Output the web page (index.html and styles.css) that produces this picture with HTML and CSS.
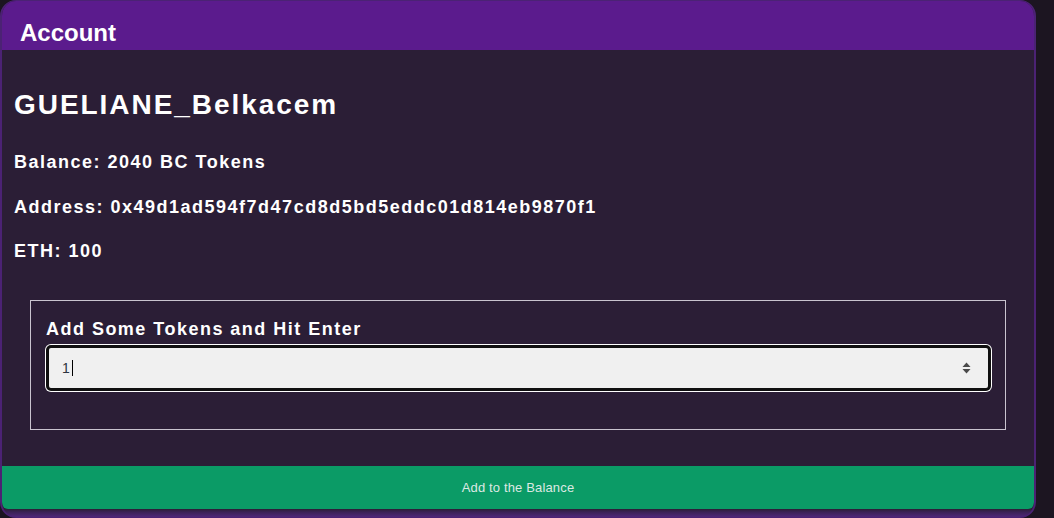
FILE: index.html
```html
<!DOCTYPE html>
<html lang="en">
<head>
<meta charset="utf-8">
<title>Account</title>
<link rel="stylesheet" href="styles.css">
</head>
<body>
<div class="card">
  <div class="card-header">Account</div>
  <div class="card-body">
    <h1 class="name">GUELIANE_Belkacem</h1>
    <p class="info info-first">Balance: 2040 BC Tokens</p>
    <p class="info">Address: 0x49d1ad594f7d47cd8d5bd5eddc01d814eb9870f1</p>
    <p class="info">ETH: 100</p>
    <form class="token-form">
      <label class="token-label" for="tokens">Add Some Tokens and Hit Enter</label>
      <div class="token-input" id="tokens" role="textbox">
        <span class="token-value">1</span><span class="caret"></span>
        <svg class="spin" width="9" height="12" viewBox="0 0 9 12" aria-hidden="true">
          <path d="M4.5 0.5 L8.5 5 L0.5 5 Z" fill="#4a4a4a"/>
          <path d="M0.5 7 L8.5 7 L4.5 11.5 Z" fill="#4a4a4a"/>
        </svg>
      </div>
    </form>
  </div>
  <button class="add-btn" type="button">Add to the Balance</button>
</div>
</body>
</html>
```

FILE: styles.css
```css
html, body {
  margin: 0;
  padding: 0;
  background: #1c1521;
  font-family: "Liberation Sans", Arial, sans-serif;
  color: #ffffff;
}

.card {
  box-sizing: border-box;
  width: 1036px;
  height: 518px;
  border: 1px solid #4b2274;
  border-left-width: 2px;
  border-right-width: 2px;
  border-radius: 16px;
  overflow: hidden;
  background: linear-gradient(to bottom, #2b1e36 0, #2b1e36 508px, #3a2255 511px, #52287e 517px);
  display: flex;
  flex-direction: column;
}

.card-header {
  box-sizing: border-box;
  height: 49px;
  padding: 18px 18px 3px;
  background: #5b1b8d;
  font-size: 24px;
  line-height: 28px;
  font-weight: bold;
}

.card-body {
  padding: 39px 12px 0;
}

.name {
  margin: 0;
  font-size: 28px;
  line-height: 32px;
  font-weight: bold;
  letter-spacing: 1.95px;
}

.info {
  margin: 22px 0 0;
  font-size: 18px;
  line-height: 22px;
  font-weight: bold;
  letter-spacing: 1.5px;
}

.info-first {
  margin-top: 30px;
}

.info + .info {
  margin-top: 23px;
}

.info + .info + .info {
  margin-top: 22px;
}

.token-form {
  margin: 38px 16px 0 16px;
  border: 1px solid #c9c4cf;
  padding: 17px 14px 38px 15px;
  display: flex;
  flex-direction: column;
  gap: 5px;
}

.token-label {
  font-size: 18px;
  line-height: 22px;
  font-weight: bold;
  letter-spacing: 1.48px;
}

.token-input {
  position: relative;
  box-sizing: border-box;
  height: 46px;
  border: 3px solid #101010;
  border-radius: 5px;
  box-shadow: 0 0 0 1px #ffffff;
  background: #f0f0f0;
  padding: 0 13px;
  display: flex;
  align-items: center;
  font-size: 14px;
  color: #2d3440;
}

.caret {
  display: inline-block;
  width: 1px;
  height: 16px;
  margin-left: 2px;
  background: #000000;
}

.spin {
  position: absolute;
  right: 17px;
  top: 14px;
}

.add-btn {
  margin-top: 36px;
  height: 43px;
  border: 0;
  padding: 0;
  border-radius: 0 0 6px 6px;
  background: #0b9b66;
  color: #dce9e3;
  font-family: "Liberation Sans", Arial, sans-serif;
  font-size: 13px;
  letter-spacing: 0.15px;
}
```
